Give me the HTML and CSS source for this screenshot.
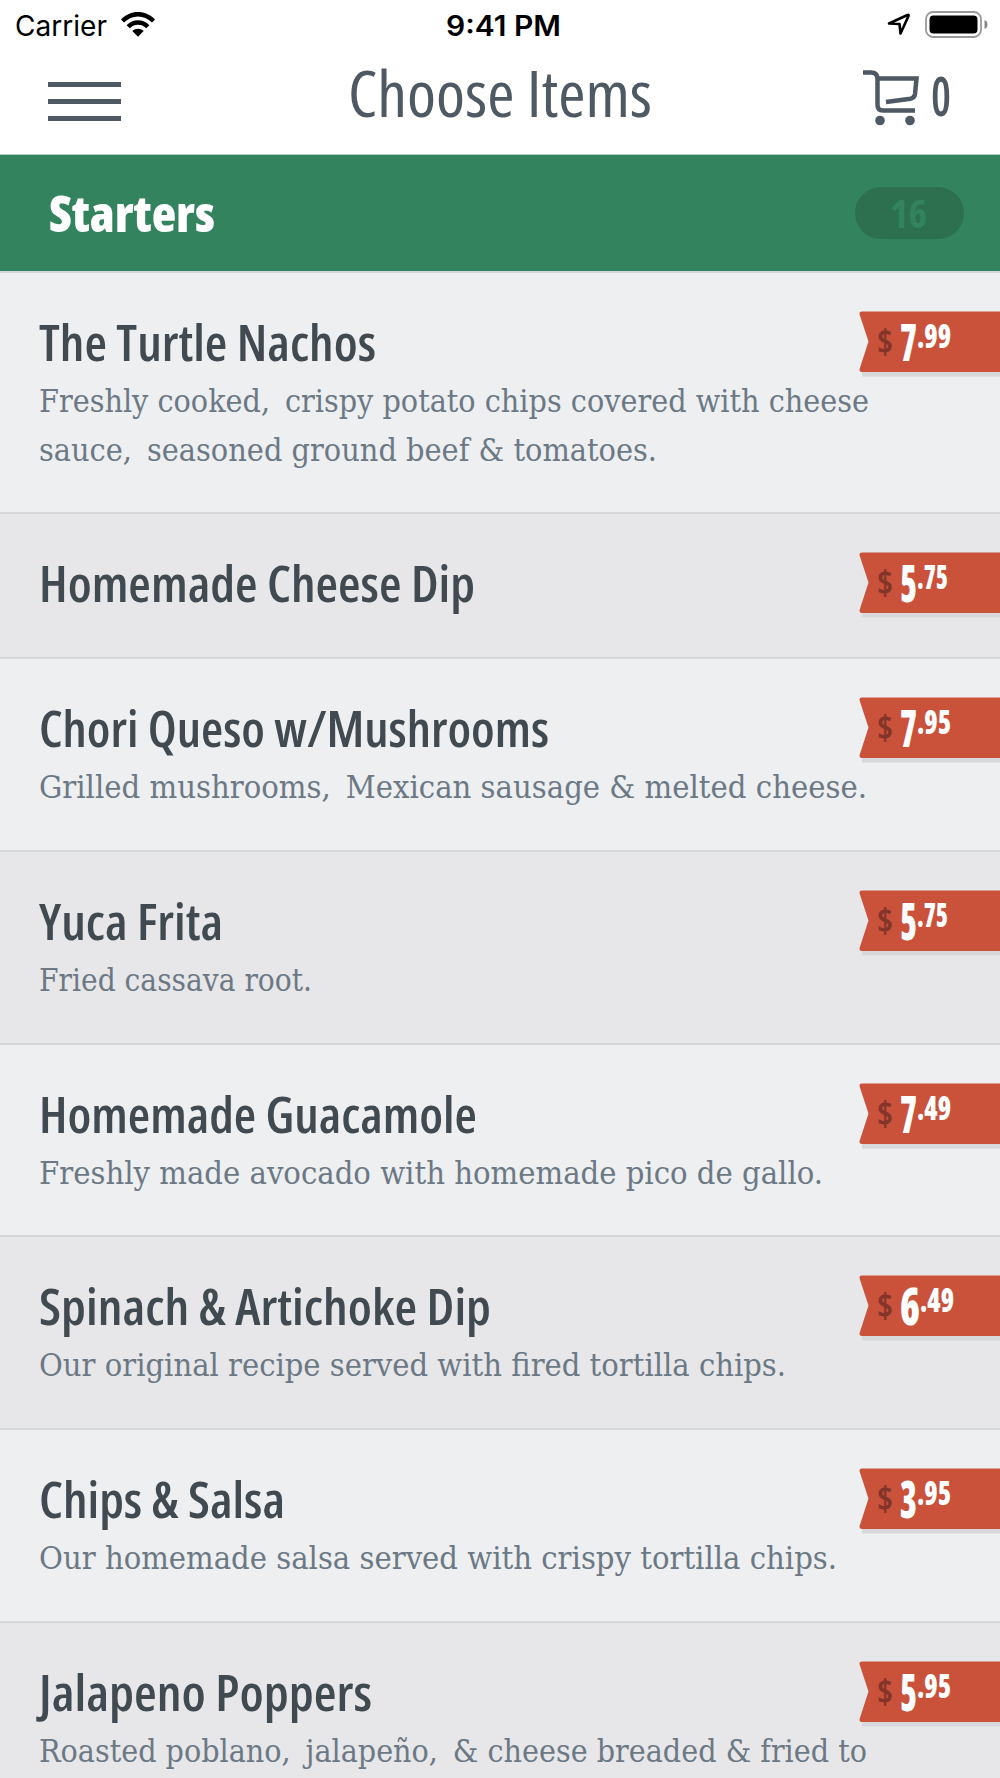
FILE: index.html
```html
<!DOCTYPE html>
<html lang="en">
<head>
    <meta charset="UTF-8">
    <meta name="viewport" content="width=device-width, initial-scale=1.0">
    <title>Choose Items</title>
    <link rel="stylesheet" href="styles.css">
</head>
<body>
    <header class="header">
        <div class="status-bar">
            <div class="status-left">
                <span class="fit" data-width="92">Carrier</span>
                <svg class="wifi" width="34" height="25" viewBox="0 0 34 25">
                    <path d="M0 7.5C9-2.5 25-2.5 34 7.5L31 10.5C23 2.5 11 2.5 3 10.5Z"/>
                    <path d="M5.6 13.2C12 6.6 22 6.6 28.4 13.2L25.2 16.2C20.5 11.6 13.5 11.6 8.8 16.2Z"/>
                    <path d="M11.3 19C14.5 15.9 19.5 15.9 22.7 19L17 24.7Z"/>
                </svg>
            </div>
            <div class="time"><span class="fit" data-width="115">9:41 PM</span></div>
            <div class="status-right">
                <svg width="24" height="23" viewBox="0 0 24 23">
                    <path d="M2 10.5L20.5 2Q22 1.5 21.5 3L13.5 20.5L12.5 11Z" fill="none" stroke="#000" stroke-width="2.600" stroke-linejoin="round"/>
                </svg>
                <svg width="64" height="28" viewBox="0 0 64 28">
                    <rect x="1" y="1" width="55" height="25" rx="7" fill="none" stroke="#999" stroke-width="1.800"/>
                    <rect x="4.500" y="4.500" width="48" height="18" rx="4"/>
                    <path d="M59.500 9Q62.500 10 62.500 13.500Q62.500 17 59.500 18Z" fill="#888"/>
                </svg>
            </div>
        </div>
        <div class="nav-bar">
            <div class="menu-btn">
                <span></span>
                <span></span>
                <span></span>
            </div>
            <h1 class="page-title"><span class="fit" data-width="304">Choose Items</span></h1>
            <div class="cart">
                <svg width="57" height="56" viewBox="0 0 57 56">
                    <path d="M0 2.5H8Q14.500 2.500 14.500 9V35Q14.500 40.500 20 40.500H52M14.500 8.500H53.500L52 24Q51.500 28 47.500 28.700L23 32" fill="none" stroke="#4e5963" stroke-width="4.500"/>
                    <circle cx="17" cy="50.500" r="4.800"/>
                    <circle cx="47" cy="50.500" r="4.800"/>
                </svg>
                <span class="cart-count"><span class="fit" data-width="20">0</span></span>
            </div>
        </div>
    </header>

    <div class="category">
        <h2><span class="fit" data-width="166">Starters</span></h2>
        <div class="badge"><span class="fit" data-width="37">16</span></div>
    </div>

    <ul class="items">
        <li class="item">
            <div class="item-text">
                <h3><span class="fit" data-width="337">The Turtle Nachos</span></h3>
                <p><span class="fit" data-width="830">Freshly cooked, &thinsp;crispy potato chips covered with cheese</span></p>
                <p><span class="fit" data-width="618">sauce, &thinsp;seasoned ground beef &amp; tomatoes.</span></p>
            </div>
            <div class="price" data-price="7.99"></div>
        </li>
        <li class="item">
            <div class="item-text">
                <h3><span class="fit" data-width="436">Homemade Cheese Dip</span></h3>
            </div>
            <div class="price" data-price="5.75"></div>
        </li>
        <li class="item">
            <div class="item-text">
                <h3><span class="fit" data-width="510">Chori Queso w/Mushrooms</span></h3>
                <p><span class="fit" data-width="828">Grilled mushrooms, &thinsp;Mexican sausage &amp; melted cheese.</span></p>
            </div>
            <div class="price" data-price="7.95"></div>
        </li>
        <li class="item">
            <div class="item-text">
                <h3><span class="fit" data-width="184">Yuca Frita</span></h3>
                <p><span class="fit" data-width="273">Fried cassava root.</span></p>
            </div>
            <div class="price" data-price="5.75"></div>
        </li>
        <li class="item">
            <div class="item-text">
                <h3><span class="fit" data-width="438">Homemade Guacamole</span></h3>
                <p><span class="fit" data-width="784">Freshly made avocado with homemade pico de gallo.</span></p>
            </div>
            <div class="price" data-price="7.49"></div>
        </li>
        <li class="item">
            <div class="item-text">
                <h3><span class="fit" data-width="452">Spinach &amp; Artichoke Dip</span></h3>
                <p><span class="fit" data-width="747">Our original recipe served with fired tortilla chips.</span></p>
            </div>
            <div class="price" data-price="6.49"></div>
        </li>
        <li class="item">
            <div class="item-text">
                <h3><span class="fit" data-width="246">Chips &amp; Salsa</span></h3>
                <p><span class="fit" data-width="798">Our homemade salsa served with crispy tortilla chips.</span></p>
            </div>
            <div class="price" data-price="3.95"></div>
        </li>
        <li class="item">
            <div class="item-text">
                <h3><span class="fit" data-width="333">Jalapeno Poppers</span></h3>
                <p><span class="fit" data-width="828">Roasted poblano, &thinsp;jalapeño, &thinsp;&amp; cheese breaded &amp; fried to</span></p>
            </div>
            <div class="price" data-price="5.95"></div>
        </li>
    </ul>

    <script src="script.js"></script>
</body>
</html>
```

FILE: styles.css
```css
* {
    box-sizing: border-box;
}

body {
    margin: 0;
    height: 1778px;
    overflow: hidden;
    background: #eeeff1;
    font-family: "Open Sans", "Noto Sans", sans-serif;
    font-stretch: 75%;
}

h1, h2, h3, p, ul {
    margin: 0;
    padding: 0;
}

.fit {
    display: inline-block;
    white-space: nowrap;
    transform-origin: 0 50%;
}

.header {
    height: 155px;
    background: #fff;
    border-bottom: 1px solid #b5cfc2;
}

.status-bar {
    display: grid;
    grid-template-columns: 1fr auto 1fr;
    height: 50px;
    padding: 0 11px 0 15px;
    font-family: Inter, sans-serif;
    font-size: 28px;
    font-stretch: normal;
    line-height: 52px;
    color: #000;
}

.status-left {
    display: flex;
    gap: 14px;
}

.wifi {
    margin-top: 12px;
}

.time {
    padding-left: 3px;
    font-weight: 600;
}

.status-right {
    display: flex;
    justify-content: flex-end;
    gap: 14px;
    padding-top: 11px;
}

.status-right svg:first-child {
    margin-top: 2px;
}

.nav-bar {
    display: grid;
    grid-template-columns: 1fr auto 1fr;
    height: 104px;
    padding: 0 49px 0 48px;
    color: #4e5963;
}

.menu-btn {
    display: flex;
    flex-direction: column;
    gap: 12px;
    width: 73px;
    padding-top: 32px;
}

.menu-btn span {
    height: 5px;
    background: #4e5963;
}

.page-title {
    font-size: 64px;
    font-weight: 400;
    line-height: 86px;
}

.cart {
    display: flex;
    justify-content: flex-end;
    gap: 11px;
}

.cart svg {
    margin-top: 20px;
    fill: #4e5963;
}

.cart-count {
    font-size: 54px;
    font-weight: 600;
    line-height: 90px;
}

.category {
    display: flex;
    justify-content: space-between;
    align-items: center;
    height: 116px;
    padding: 0 36px 0 49px;
    background: #33835f;
    color: #fff;
}

.category h2 {
    font-size: 50px;
    font-weight: 800;
    line-height: 114px;
}

.badge {
    display: flex;
    justify-content: center;
    width: 109px;
    height: 52px;
    padding-right: 3px;
    border-radius: 26px;
    background: #2c7050;
    color: #33835f;
    font-size: 40px;
    font-weight: 700;
    line-height: 51px;
}

.items {
    list-style: none;
}

.item {
    display: flex;
    justify-content: space-between;
    padding-bottom: 38.4px;
    border-top: 2px solid #d6d7d9;
    background: #eeeff1;
}

.item:nth-child(even) {
    background: #e7e7e9;
}

.item-text {
    width: 859px;
    padding: 42px 0 0 39px;
}

.item h3 {
    margin-bottom: 10px;
    color: #414a51;
    font-size: 51px;
    font-weight: 600;
    line-height: 52px;
}

.item p {
    height: 48.5px;
    color: #6c7985;
    font-family: "DejaVu Serif Condensed", "DejaVu Serif", serif;
    font-size: 32px;
    font-stretch: normal;
    line-height: 48.5px;
}

/* price ribbon */
.price {
    position: relative;
    display: flex;
    flex: none;
    width: 141px;
    height: 66px;
    margin-top: 38px;
    padding-left: 18px;
    color: #fff;
    font-weight: 800;
}

.ribbon {
    position: absolute;
    top: 0;
    left: 0;
}

.price .fit {
    position: relative;
}

.dollar {
    width: 23px;
    color: #84352a;
    font-size: 34px;
    font-weight: 700;
    line-height: 61px;
}

.whole {
    font-size: 51px;
    line-height: 61px;
}

.cents {
    font-size: 34px;
    line-height: 48px;
}
```

FILE: script.js
```js
const ribbon = `
    <svg class="ribbon" width="141" height="66" viewBox="0 0 141 66">
        <path d="M3 61H141V65.5H3Z" fill="#d7d8da"/>
        <path d="M3 .5H141V61H3Q0 61 .6 58L9.5 30.5L.6 3.5Q0 .5 3 .5Z" fill="#ca523a"/>
    </svg>
`;

document.querySelectorAll('.price').forEach(el => {
    const [whole, cents] = el.dataset.price.split('.');
    el.innerHTML = `
        ${ribbon}
        <span class="dollar"><span class="fit" data-width="16">$</span></span>
        <span class="whole"><span class="fit" data-width="${whole === '6' ? 20 : 17}">${whole}</span></span>
        <span class="cents"><span class="fit" data-width="${cents === '75' ? 31 : 34}">.${cents}</span></span>
    `;
});

document.querySelectorAll('.fit').forEach(el => {
    const natural = el.getBoundingClientRect().width;
    const width = Number(el.dataset.width);
    el.style.transform = `scaleX(${width / natural})`;
    el.style.marginRight = `${width - natural}px`;
});
```
